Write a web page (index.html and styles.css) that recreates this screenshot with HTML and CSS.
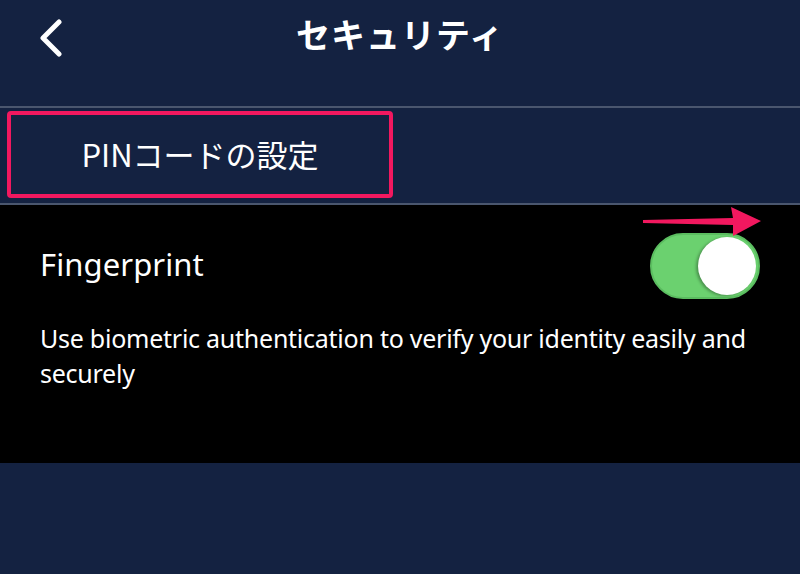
FILE: index.html
```html
<!DOCTYPE html>
<html lang="ja">
<head>
    <meta charset="UTF-8">
    <meta name="viewport" content="width=device-width, initial-scale=1.0">
    <title>セキュリティ</title>
    <link rel="stylesheet" href="styles.css">
</head>
<body>
    <div class="topbar">
        <button class="back-btn" aria-label="戻る">
            <svg width="26" height="38" viewBox="0 0 26 38">
                <polyline points="21,3 5,19 21,35" fill="none" stroke="#fff" stroke-width="5" stroke-linecap="round" stroke-linejoin="round"/>
            </svg>
        </button>
        <h1>セキュリティ</h1>
    </div>

    <!-- PIN code row -->
    <div class="pin-row">
        <div class="pin-box">PINコードの設定</div>
    </div>

    <!-- Fingerprint setting -->
    <div class="settings">
        <div class="setting-head">
            <span class="setting-title">Fingerprint</span>
            <div class="toggle on">
                <div class="knob"></div>
            </div>
        </div>
        <p class="setting-desc">Use biometric authentication to verify your identity easily and securely</p>

        <svg class="hint-arrow" width="122" height="30" viewBox="0 0 122 30">
            <polygon points="2,13 92,11 90,0 120,14 92,29 92,18 2,16" fill="#f2185f"/>
        </svg>
    </div>

    <div class="bottom"></div>
</body>
</html>
```

FILE: styles.css
```css
body {
    margin: 0;
    background-color: #142241;
    color: #fff;
    font-family: "Noto Sans", "Noto Sans CJK JP", sans-serif;
    height: 574px;
    overflow: hidden;
}

/* Top bar */
.topbar {
    height: 106px;
    display: flex;
    align-items: flex-start;
    justify-content: center;
    position: relative;
    border-bottom: 2px solid #4a566e;
}

.topbar h1 {
    margin: 9px 0 0;
    font-family: "Noto Sans CJK JP", sans-serif;
    font-size: 34px;
    font-weight: 700;
    letter-spacing: 1px;
}

.back-btn {
    position: absolute;
    left: 38px;
    top: 19px;
    background: none;
    border: none;
    padding: 0;
    cursor: pointer;
}

/* PIN row */
.pin-row {
    height: 97px;
    padding: 3px 0 0 7px;
    box-sizing: border-box;
    border-bottom: 2px solid #4a566e;
}

.pin-box {
    width: 386px;
    height: 87px;
    box-sizing: border-box;
    border: 4px solid #f2185f;
    border-radius: 4px;
    display: flex;
    align-items: center;
    justify-content: center;
    font-family: "Noto Sans CJK JP", sans-serif;
    font-size: 31px;
    padding-bottom: 2px;
}

/* Fingerprint setting */
.settings {
    position: relative;
    background-color: #000;
    height: 258px;
    padding: 0 40px;
    box-sizing: border-box;
}

.setting-head {
    display: flex;
    align-items: center;
    justify-content: space-between;
    padding-top: 28px;
}

.setting-title {
    font-size: 31px;
    letter-spacing: 0.1px;
    margin-top: -4px;
}

.toggle {
    width: 110px;
    height: 66px;
    border-radius: 33px;
    background-color: #4a4a4a;
    position: relative;
    box-sizing: border-box;
}

.toggle.on {
    background-color: #6bd16f;
    border: 2px solid #5bbd60;
}

.knob {
    position: absolute;
    top: 2px;
    right: 2px;
    width: 58px;
    height: 58px;
    border-radius: 50%;
    background-color: #fff;
    box-shadow: -2px 1px 3px rgba(0, 0, 0, 0.3);
}

.setting-desc {
    margin: 22px 0 0;
    font-size: 25px;
    line-height: 35px;
    letter-spacing: -0.25px;
}

.hint-arrow {
    position: absolute;
    left: 641px;
    top: 2px;
}
```
